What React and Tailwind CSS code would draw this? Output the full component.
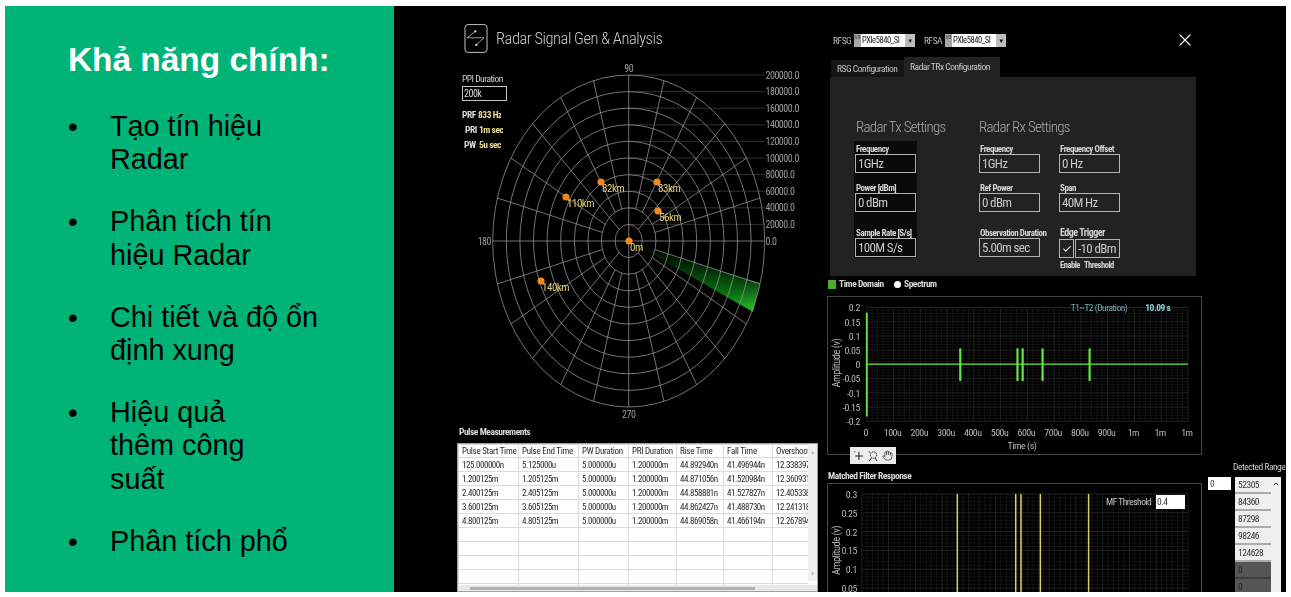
import React from "react";
import { Hand, X, Check, ChevronUp } from "lucide-react";

const bullets = [
  ["Tạo tín hiệu", "Radar"],
  ["Phân tích tín", "hiệu Radar"],
  ["Chi tiết và độ ổn", "định xung"],
  ["Hiệu quả", "thêm công", "suất"],
  ["Phân tích phổ"],
];

const CX = 628.7, CY = 241, RX = 13.6, RY = 16.6;
const rings = [1, 2, 3, 4, 5, 6, 7, 8, 9, 10];
const spokes = Array.from({ length: 24 }, (_, i) => i * 15);
const dots = [
  [601, 182, "82km"], [657, 182, "83km"], [566, 197, "110km"],
  [658, 211, "56km"], [629, 241, "0m"], [541, 281, "140km"],
];

function Radar() {
  return (
    <svg viewBox="394 60 433 364" className="block w-[433px] h-[364px]">
      <defs>
        <linearGradient id="wedge" gradientUnits="userSpaceOnUse" x1="640" y1="247" x2="753" y2="312">
          <stop offset="0" stopColor="#021a02" />
          <stop offset="0.4" stopColor="#045a0a" />
          <stop offset="0.8" stopColor="#0a8a14" />
          <stop offset="1" stopColor="#2bb52a" />
        </linearGradient>
        <linearGradient id="wedgeFade" gradientUnits="userSpaceOnUse" x1="750" y1="280" x2="743" y2="304">
          <stop offset="0" stopColor="#000000" stopOpacity="0.6" />
          <stop offset="1" stopColor="#000000" stopOpacity="0" />
        </linearGradient>
      </defs>
      <polygon points="640,247 760,283 753,312" fill="url(#wedge)" />
      <polygon points="640,247 760,283 753,312" fill="url(#wedgeFade)" />
      {rings.map((r) => (
        <line key={r} x1={CX} x2="765" y1={CY - r * RY} y2={CY - r * RY} stroke="#3c3c3c" strokeWidth="0.8" />
      ))}
      {rings.map((r) => (
        <ellipse key={r} cx={CX} cy={CY} rx={r * RX} ry={r * RY} fill="none" stroke="#909090" strokeWidth="0.8" />
      ))}
      {spokes.map((a) => {
        const start = a % 90 === 0 ? 0 : a % 45 === 0 ? 1 : 2;
        const c = Math.cos((a * Math.PI) / 180), s = Math.sin((a * Math.PI) / 180);
        return (
          <line key={a} x1={CX + start * RX * c} y1={CY - start * RY * s} x2={CX + 10 * RX * c} y2={CY - 10 * RY * s} stroke="#909090" strokeWidth="0.8" />
        );
      })}
      {[0, ...rings].map((r) => (
        <text key={r} x="765.5" y={CY - r * RY + 3.5} fontSize="10" fill="#9a9a9a">
          {(r * 20000).toFixed(1)}
        </text>
      ))}
      <text x={CX} y="72" fontSize="10" fill="#9a9a9a" textAnchor="middle">90</text>
      <text x="491" y="245" fontSize="10" fill="#9a9a9a" textAnchor="end">180</text>
      <text x={CX} y="418" fontSize="10" fill="#9a9a9a" textAnchor="middle">270</text>
      {dots.map(([x, y, t]) => (
        <g key={t}>
          <circle cx={x} cy={y} r="3.6" fill="#f08a1c" />
          <text x={x + 1} y={y + 10} fontSize="11" fill="#e2cf78">{t}</text>
        </g>
      ))}
    </svg>
  );
}

const tableHead = ["Pulse Start Time", "Pulse End Time", "PW Duration", "PRI Duration", "Rise Time", "Fall Time", "Overshoot"];
const tableRows = [
  ["125.000000n", "5.125000u", "5.000000u", "1.200000m", "44.892940n", "41.496944n", "12.338397"],
  ["1.200125m", "1.205125m", "5.000000u", "1.200000m", "44.871056n", "41.520984n", "12.360931"],
  ["2.400125m", "2.405125m", "5.000000u", "1.200000m", "44.858881n", "41.527827n", "12.405338"],
  ["3.600125m", "3.605125m", "5.000000u", "1.200000m", "44.862427n", "41.488730n", "12.241318"],
  ["4.800125m", "4.805125m", "5.000000u", "1.200000m", "44.869058n", "41.466194n", "12.267894"],
  ["", "", "", "", "", "", ""],
  ["", "", "", "", "", "", ""],
  ["", "", "", "", "", "", ""],
  ["", "", "", "", "", "", ""],
  ["", "", "", "", "", "", ""],
];

function PulseTable() {
  return (
    <div className="relative ml-[63px] mt-[6px] w-[361px] h-[149px] bg-white border border-[#a0a0a0] overflow-hidden flex">
      <div className="w-[350px] overflow-hidden">
        <table className="table-fixed w-[350px] border-collapse text-[9px] text-[#2c2c2c]">
          <colgroup>
            <col className="w-[60px]" /><col className="w-[60px]" /><col className="w-[50px]" />
            <col className="w-[48px]" /><col className="w-[47px]" /><col className="w-[49px]" /><col className="w-[36px]" />
          </colgroup>
          <tbody>
            {[tableHead, ...tableRows].map((row, i) => (
              <tr key={i} className={i === 0 ? "h-[13px]" : "h-[14px]"}>
                {row.map((c, j) => (
                  <td key={j} className={(i === 0 ? "tracking-[-0.03em] " : "tracking-[-0.05em] ") + "border border-[#dcdcdc] pl-[3px] leading-[12px] whitespace-nowrap overflow-hidden"}>{c}</td>
                ))}
              </tr>
            ))}
          </tbody>
        </table>
      </div>
      <div className="flex-1 bg-[#f0f0f0] flex flex-col items-center justify-between py-[3px] text-[#c0c0c0] text-[6px] h-[137px]">
        <span>▲</span><span>▼</span>
      </div>
      <div className="absolute left-0 right-0 bottom-0 h-[6px] bg-[#e8e8e8] pl-[12px]">
        <div className="h-[3px] w-[285px] mt-[2px] bg-[#b0b0b0]" />
      </div>
    </div>
  );
}

function Field({ label, value, mt = "" }) {
  return (
    <div className={mt}>
      <div className="h-[10px] leading-[10px] text-[9px] font-bold text-[#d4d4d4] whitespace-nowrap pl-[1px]">{label}</div>
      <div className="w-[61px] h-[19px] border-[1.5px] border-[#b4b4b4] text-[13px] tracking-[-0.05em] leading-[17px] text-[#c8c8c8] pl-[2px] whitespace-nowrap">{value}</div>
    </div>
  );
}

function Selector({ name }) {
  return (
    <div className="flex items-center gap-[4px]">
      <span className="text-[#bdbdbd] text-[9.5px] w-[17px] leading-none pt-[1px]">{name}</span>
      <div className="flex h-[13px] w-[61px]">
        <div className="w-[7px] bg-[#a8a8a8] text-[5px] leading-[6px] text-center text-[#222] tracking-normal">I/O</div>
        <div className="w-[44px] bg-white text-[#222] text-[8.5px] tracking-[-0.05em] leading-[13px] pl-[1px] whitespace-nowrap overflow-hidden">PXIe5840_SI</div>
        <div className="w-[10px] bg-[#bdbdbd] flex items-center justify-center text-[6px] text-[#111]">▼</div>
      </div>
    </div>
  );
}

function TimeChart() {
  const yLabels = ["0.2", "0.15", "0.1", "0.05", "0", "-0.05", "-0.1", "-0.15", "-0.2"];
  const xLabels = ["0", "100u", "200u", "300u", "400u", "500u", "600u", "700u", "800u", "900u", "1m", "1m", "1m"];
  const minorV = Array.from({ length: 61 }, (_, i) => 866 + i * 5.38);
  const minorH = Array.from({ length: 41 }, (_, i) => 306.7 + i * 2.88);
  return (
    <svg viewBox="827 296 375 159" className="block w-[373px] h-[157px]" preserveAspectRatio="none">
      {minorV.map((x, i) => (
        <line key={i} x1={x} x2={x} y1="306" y2="422" stroke={i % 5 === 0 ? "#2e2e2e" : "#1a1a1a"} strokeWidth="0.7" />
      ))}
      {minorH.map((y, i) => (
        <line key={i} x1="866" x2="1189" y1={y} y2={y} stroke={i % 5 === 0 ? "#2e2e2e" : "#191919"} strokeWidth="0.7" />
      ))}
      {yLabels.map((t, i) => (
        <text key={i} x="859" y={310.5 + i * 14.4} fontSize="10" fill="#b8b8b8" textAnchor="end">{t}</text>
      ))}
      {xLabels.map((t, i) => (
        <text key={i} x={865 + i * 26.9} y="437" fontSize="10" fill="#b8b8b8" textAnchor="middle">{t}</text>
      ))}
      <text x="1022" y="450" fontSize="10" fill="#b8b8b8" textAnchor="middle">Time (s)</text>
      <text transform="translate(839.5 363) rotate(-90)" fontSize="10.5" fill="#b0b0b0" textAnchor="middle">Amplitude (v)</text>
      <text x="1071" y="310.5" fontSize="9.5" fill="#7da9b0">T1~T2 (Duration)</text>
      <text x="1146" y="310.5" fontSize="9.5" fontWeight="700" fill="#8fd2d6">10.09 s</text>
      <line x1="866" x2="1189" y1="364" y2="364" stroke="#62e83e" strokeWidth="1.2" />
      <line x1="866" x2="866" y1="312" y2="417" stroke="#62e83e" strokeWidth="1.9" />
      {[960, 1017.5, 1022.7, 1042.7, 1090].map((x) => (
        <line key={x} x1={x} x2={x} y1="348" y2="381" stroke="#62e83e" strokeWidth="2.2" />
      ))}
    </svg>
  );
}

function FilterChart() {
  const yLabels = ["0.3", "0.25", "0.2", "0.15", "0.1", "0.05"];
  const minorV = Array.from({ length: 62 }, (_, i) => 861 + i * 5.38);
  const minorH = Array.from({ length: 26 }, (_, i) => 493 + i * 3.8);
  return (
    <svg viewBox="827 483 375 109" className="block w-[373px] h-[108px]" preserveAspectRatio="none">
      {minorV.map((x, i) => (
        <line key={i} x1={x} x2={x} y1="493" y2="592" stroke={i % 5 === 0 ? "#2e2e2e" : "#1a1a1a"} strokeWidth="0.7" />
      ))}
      {minorH.map((y, i) => (
        <line key={i} x1="861" x2="1189" y1={y} y2={y} stroke={i % 5 === 0 ? "#2e2e2e" : "#191919"} strokeWidth="0.7" />
      ))}
      {yLabels.map((t, i) => (
        <text key={i} x="856" y={497 + i * 19} fontSize="10" fill="#b8b8b8" textAnchor="end">{t}</text>
      ))}
      <text transform="translate(839.5 550) rotate(-90)" fontSize="10.5" fill="#b0b0b0" textAnchor="middle">Amplitude (v)</text>
      {[957, 1015.7, 1021, 1040.5, 1089].map((x) => (
        <line key={x} x1={x} x2={x} y1="493" y2="592" stroke="#d4d166" strokeWidth="1.5" />
      ))}
    </svg>
  );
}

export default function App() {
  return (
    <div className="bg-white h-[597px] w-[1291px] overflow-hidden pt-[6px] pl-[5px]">
      <div className="flex h-[586px] w-[1281px]">
        {/* green slide column */}
        <div className="w-[389px] bg-[#00b478] font-['Liberation_Sans',Arial,sans-serif] pl-[63px] pt-[34px] text-black">
          <h1 className="text-[33.4px] leading-[40px] font-bold text-white whitespace-nowrap">Khả năng chính:</h1>
          <ul className="mt-[30px] flex flex-col gap-[28.5px]">
            {bullets.map((lines, i) => (
              <li key={i} className="flex text-[28.8px] leading-[33.4px]">
                <span className="w-[42px] shrink-0 text-[28px]">•</span>
                <span className="whitespace-nowrap">
                  {lines.map((l) => (<span key={l} className="block">{l}</span>))}
                </span>
              </li>
            ))}
          </ul>
        </div>

        {/* application screenshot */}
        <div className="flex w-[892px] bg-black overflow-hidden tracking-[-0.03em] font-['Liberation_Sans_Narrow','Roboto_Condensed',Roboto,sans-serif] blur-[0.35px]">
          {/* left column */}
          <div className="w-[433px] shrink-0">
            <div className="flex items-center h-[29px] mt-[18px] ml-[70px] gap-[8px]">
              <svg viewBox="0 0 24 30" className="w-[24px] h-[29px]" fill="none">
                <rect x="0.6" y="0.6" width="22.8" height="28.8" rx="3" stroke="#c8c8c8" strokeWidth="1" />
                <path d="M11.3 7.6 2.6 14.3H20.3L12.3 21.6" stroke="#c8c8c8" strokeWidth="0.8" />
                <circle cx="11.3" cy="7.6" r="1.2" fill="#e0e0e0" />
                <circle cx="12.3" cy="21.6" r="1.2" fill="#e0e0e0" />
              </svg>
              <span className="text-[16.5px] font-light text-[#c8c8c8] whitespace-nowrap pt-[1px]">Radar Signal Gen &amp; Analysis</span>
            </div>
            <div className="relative mt-[7px] h-[364px]">
              <Radar />
              <div className="absolute left-[68px] top-[13px] text-[9.5px]">
                <div className="leading-[12px] text-[#cfcfcf] whitespace-nowrap">PPI Duration</div>
                <div className="w-[45px] h-[15px] border border-[#c4c4c4] text-[#d4d4d4] text-[10px] leading-[13px] pl-[1px] mt-[1px]">200k</div>
                <div className="flex items-center h-[15px] mt-[7px] font-bold">
                  <span className="w-[16px] text-[#d8d8d8]">PRF</span>
                  <span className="w-[23px] overflow-hidden whitespace-nowrap text-[#ecdc94]">833 Hz</span>
                </div>
                <div className="flex items-center h-[15px] font-bold">
                  <span className="w-[17px] pl-[3px] text-[#d8d8d8]">PRI</span>
                  <span className="w-[24px] overflow-hidden whitespace-nowrap text-[#ecdc94]">1m sec</span>
                </div>
                <div className="flex items-center h-[15px] font-bold">
                  <span className="w-[17px] pl-[2px] text-[#d8d8d8]">PW</span>
                  <span className="w-[24px] overflow-hidden whitespace-nowrap text-[#ecdc94]">5u sec</span>
                </div>
              </div>
            </div>
            <div className="ml-[65px] mt-[3px] h-[10px] leading-[10px] text-[9.5px] font-bold text-[#d8d8d8]">Pulse Measurements</div>
            <PulseTable />
          </div>

          {/* middle column */}
          <div className="w-[375px] shrink-0">
            <div className="flex items-center h-[13px] mt-[28px] pl-[6px] gap-[9px] relative">
              <Selector name="RFSG" />
              <Selector name="RFSA" />
              <X className="absolute left-[348px] top-[-4px] w-[20px] h-[20px] text-white" strokeWidth={1.4} />
            </div>
            <div className="flex items-end h-[20px] mt-[10px] pl-[4px]">
              <div className="w-[73px] h-[17px] bg-[#151515] pl-[6px] text-[9.5px] leading-[17px] text-[#c0c0c0] whitespace-nowrap">RSG Configuration</div>
              <div className="w-[96px] h-[20px] bg-[#222222] pl-[6px] text-[9.5px] leading-[19px] text-[#c8c8c8] whitespace-nowrap">Radar TRx Configuration</div>
            </div>
            <div className="flex ml-[3px] w-[366px] h-[199px] bg-[#222222] pt-[40px] pl-[24px]">
              <div className="w-[125px] shrink-0">
                <div className="h-[20px] pl-[2px] text-[15px] tracking-[-0.05em] leading-[20px] font-light text-[#a8a8a8] whitespace-nowrap">Radar Tx Settings</div>
                <div className="mt-[4px] w-[63px] h-[117px] bg-[#0a0a0a] pt-[3px] pl-[1px]">
                  <Field label="Frequency" value="1GHz" />
                  <Field label="Power [dBm]" value="0 dBm" mt="mt-[10px]" />
                  <Field label="Sample Rate [S/s]" value="100M S/s" mt="mt-[16px]" />
                </div>
              </div>
              <div className="w-[80px] shrink-0">
                <div className="h-[20px] text-[15px] tracking-[-0.05em] leading-[20px] font-light text-[#a8a8a8] whitespace-nowrap">Radar Rx Settings</div>
                <div className="mt-[7px]">
                  <Field label="Frequency" value="1GHz" />
                  <Field label="Ref Power" value="0 dBm" mt="mt-[10px]" />
                  <Field label="Observation Duration" value="5.00m sec" mt="mt-[16px]" />
                </div>
              </div>
              <div className="w-[61px] shrink-0 pt-[27px]">
                <Field label="Frequency Offset" value="0 Hz" />
                <Field label="Span" value="40M Hz" mt="mt-[10px]" />
                <div className="mt-[16px]">
                  <div className="h-[10px] leading-[10px] text-[10px] font-bold text-[#d4d4d4] whitespace-nowrap pl-[1px]">Edge Trigger</div>
                  <div className="flex mt-[1px] gap-[1px]">
                    <div className="w-[15px] h-[19px] border-[1.5px] border-[#b4b4b4] flex items-center justify-center">
                      <Check className="w-[10px] h-[10px] text-white" strokeWidth={2.5} />
                    </div>
                    <div className="w-[45px] h-[19px] border-[1.5px] border-[#b4b4b4] text-[13px] tracking-[-0.05em] leading-[17px] text-[#c8c8c8] pl-[2px] whitespace-nowrap">-10 dBm</div>
                  </div>
                  <div className="flex gap-[4px] mt-[2px] text-[8.5px] font-bold text-[#d4d4d4] leading-[10px] pl-[1px] whitespace-nowrap">
                    <span>Enable</span><span>Threshold</span>
                  </div>
                </div>
              </div>
            </div>
            <div className="flex items-center h-[10px] mt-[3px] pl-[1px] text-[9.5px] font-bold text-[#d8d8d8] leading-none">
              <span className="w-[8px] h-[9px] bg-[#4caf2c]" />
              <span className="ml-[3px] w-[47px] whitespace-nowrap">Time Domain</span>
              <span className="ml-[8px] w-[7px] h-[7px] rounded-full bg-white" />
              <span className="ml-[3px]">Spectrum</span>
            </div>
            <div className="relative mt-[7px] h-[159px] border border-[#3f4a3b]">
              <TimeChart />
              <div className="absolute left-[22px] top-[150px] w-[46px] h-[17px] bg-[#ececec] flex items-center justify-around px-[1px] text-[#222]">
                <svg viewBox="0 0 12 12" className="w-[11px] h-[11px]" fill="none" stroke="#222" strokeWidth="1.1">
                  <path d="M6.5 2V11M2.5 6.5H11" />
                  <circle cx="2" cy="2" r="0.8" fill="#3a9a3a" stroke="none" />
                </svg>
                <svg viewBox="0 0 12 12" className="w-[12px] h-[12px]" fill="none" stroke="#222" strokeWidth="1">
                  <circle cx="6.5" cy="5" r="3.2" strokeDasharray="1.4 0.8" />
                  <path d="M4.5 8 2 11M8 8l2 3" />
                  <circle cx="2.5" cy="2" r="1" fill="#4aa84a" stroke="none" />
                </svg>
                <Hand className="w-[11px] h-[11px] text-[#333]" strokeWidth={1.6} />
              </div>
            </div>
            <div className="mt-[16px] h-[10px] leading-[10px] pl-[1px] text-[9.5px] font-bold text-[#d8d8d8]">Matched Filter Response</div>
            <div className="relative mt-[2px] h-[115px] border border-[#4a4a3c]">
              <FilterChart />
              <div className="absolute left-[278px] top-[11px] flex items-center gap-[4px]">
                <span className="text-[9.5px] text-[#c4c4c4] whitespace-nowrap w-[46px]">MF Threshold</span>
                <span className="w-[29px] h-[14px] bg-white text-[9.5px] leading-[14px] pl-[1px] text-[#333]">0.4</span>
              </div>
            </div>
          </div>

          {/* right column */}
          <div className="ml-[6px] w-[78px] shrink-0 pt-[456px]">
            <div className="ml-[25px] h-[10px] leading-[10px] text-[9.5px] text-[#c8c8c8] whitespace-nowrap">Detected Range</div>
            <div className="flex mt-[5px] items-start gap-[4px]">
              <div className="w-[23px] h-[13px] bg-white text-[9.5px] leading-[13px] pl-[2px] text-[#444]">0</div>
              <div className="flex w-[46px] bg-[#f0f0f0]">
                <div className="w-[36px]">
                  {["52305", "84360", "87298", "98246", "124628"].map((v) => (
                    <div key={v} className="h-[17px] bg-[#efefef] border-b-[2px] border-[#ababab] pl-[3px] text-[9.5px] leading-[15px] text-[#333]">{v}</div>
                  ))}
                  {["a", "b", "c"].map((k) => (
                    <div key={k} className="h-[17px] bg-[#565656] border-b-[2px] border-[#3e3e3e] pl-[3px] text-[9.5px] leading-[15px] text-[#222]">0</div>
                  ))}
                </div>
                <div className="flex-1 flex justify-center pt-[3px]">
                  <ChevronUp className="w-[8px] h-[8px] text-[#333]" strokeWidth={3} />
                </div>
              </div>
            </div>
          </div>
        </div>
      </div>
    </div>
  );
}
